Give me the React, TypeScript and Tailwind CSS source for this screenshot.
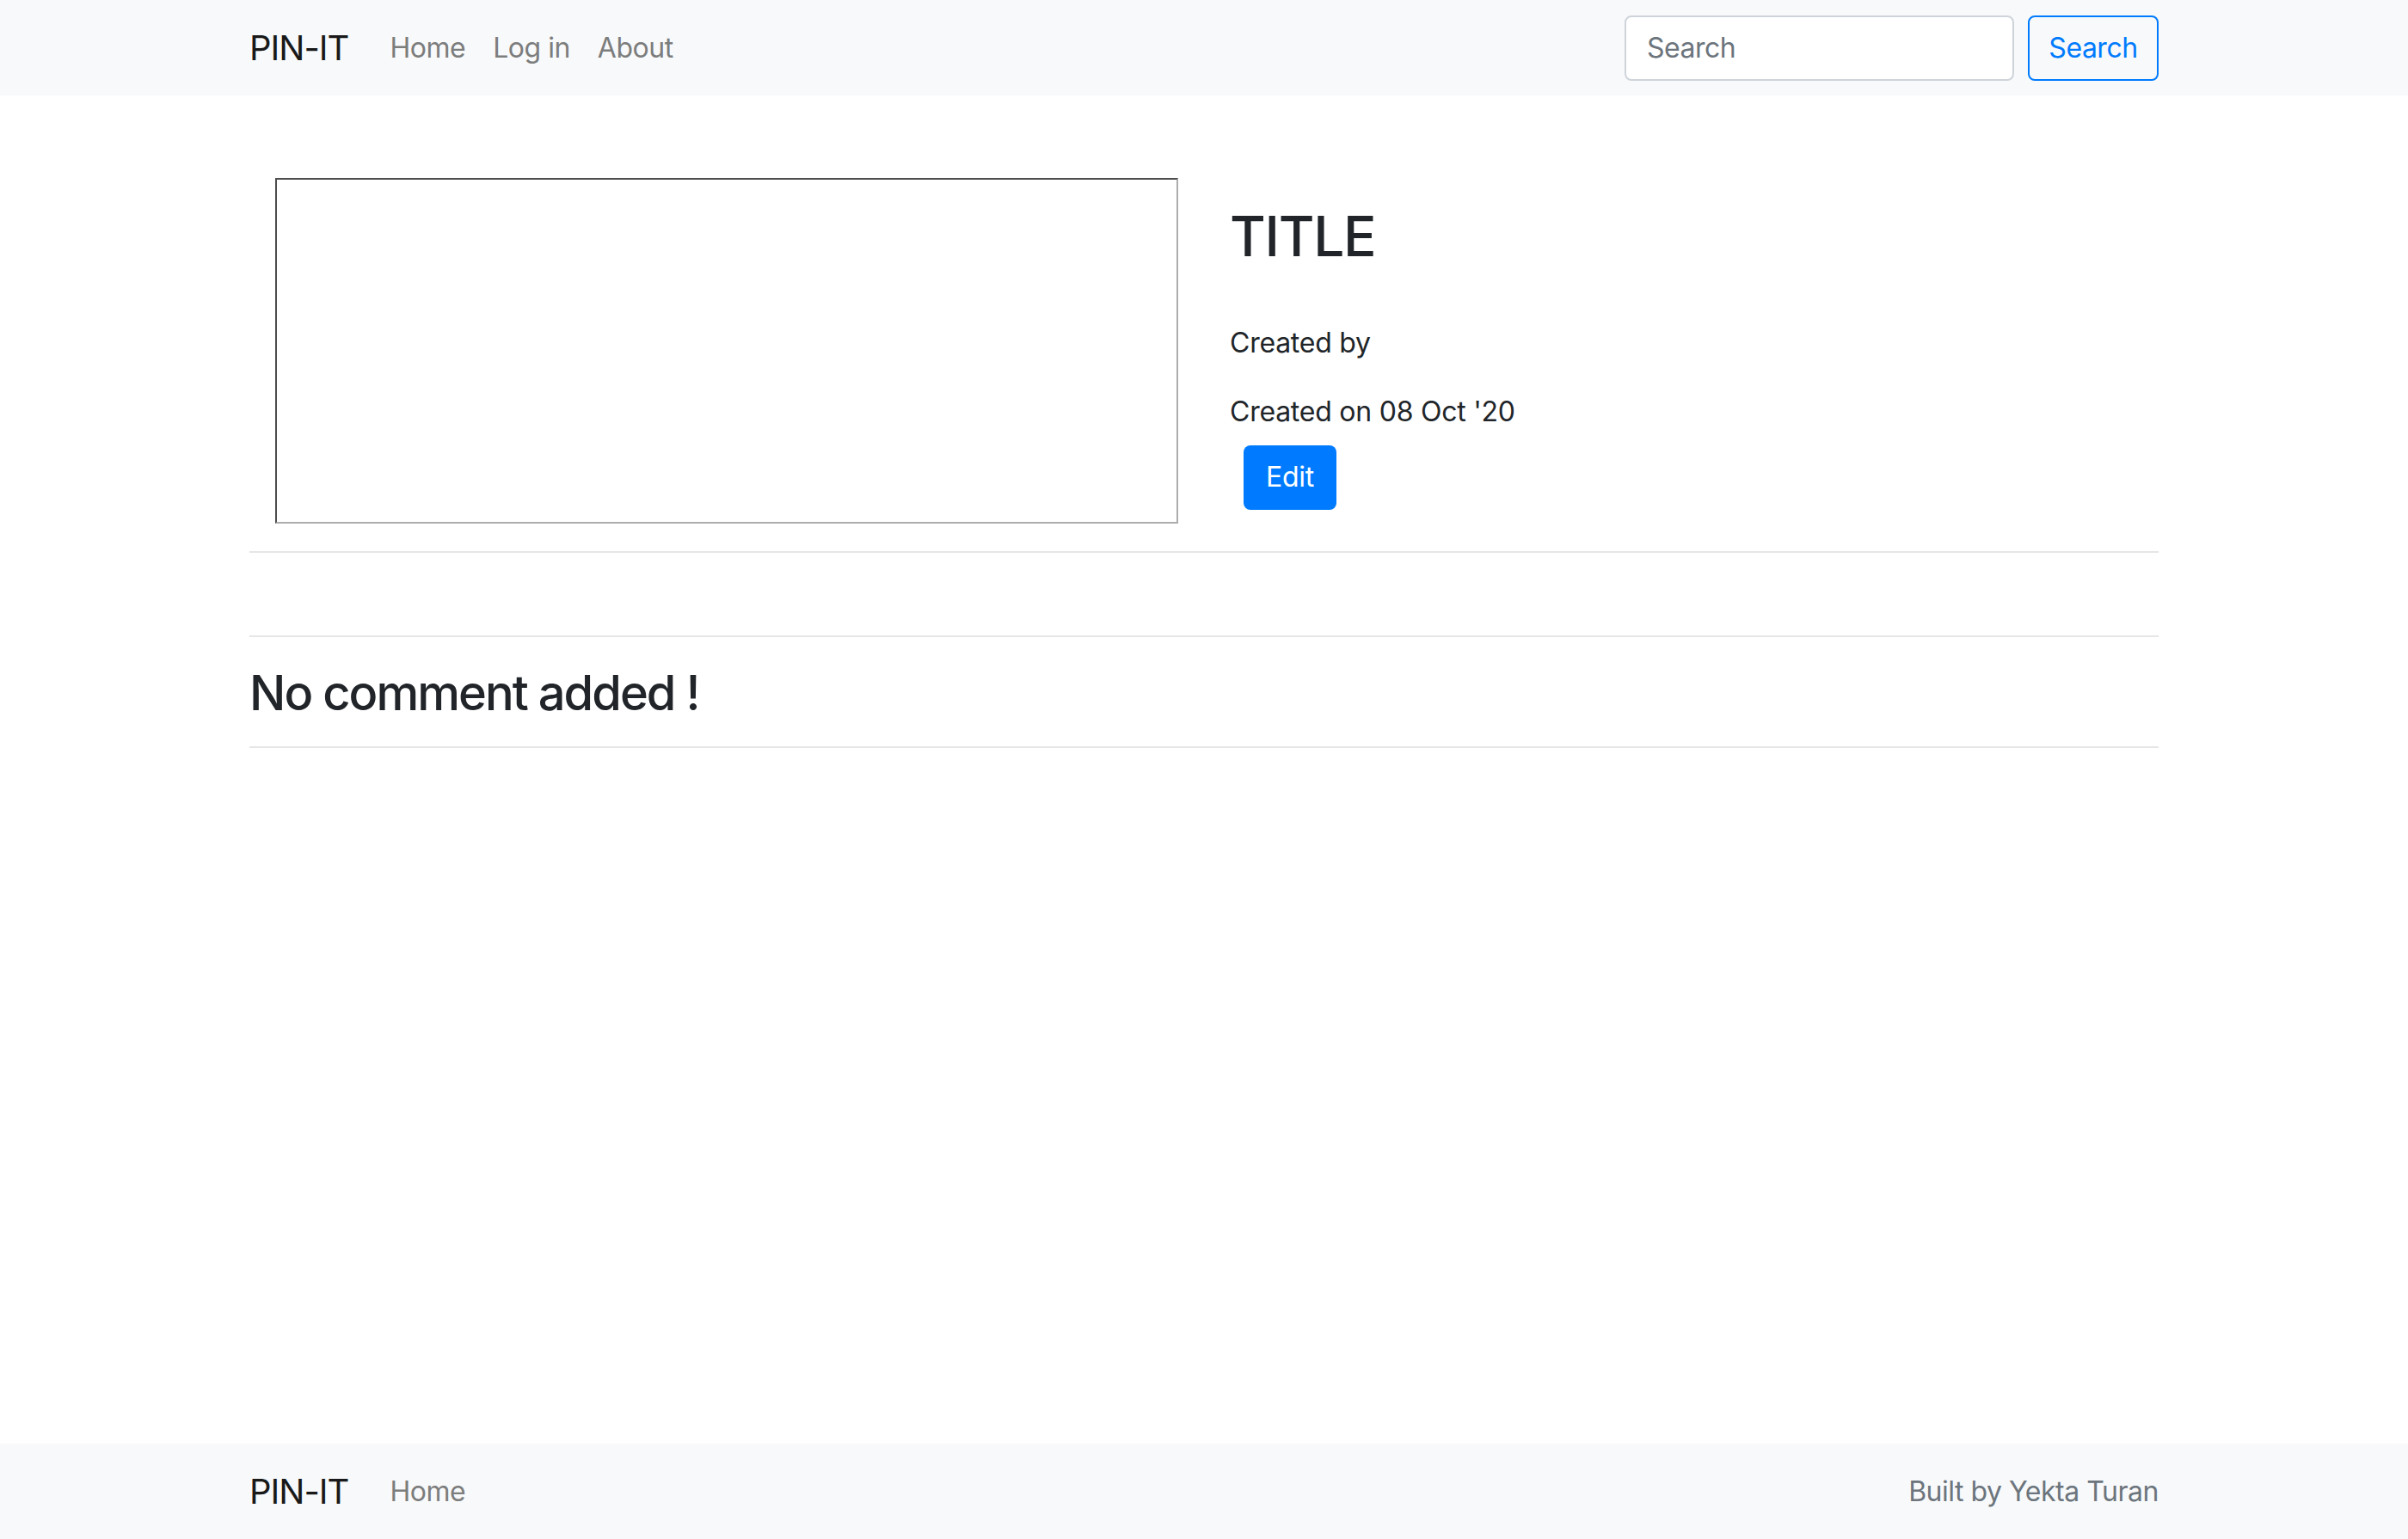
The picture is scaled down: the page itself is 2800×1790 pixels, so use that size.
import React from 'react'

const font = { fontFamily: 'Inter, "Noto Sans", sans-serif' }

const Brand = () => (
  <span className="text-[40px] leading-[60px] tracking-[-0.025em] text-[#191919] mr-[32px]">PIN-IT</span>
)

const NavLink = ({ label }: { label: string }) => (
  <a className="px-[16px] text-[32px] leading-[48px] tracking-[-0.015em] text-[#7c7d7d]">{label}</a>
)

const Navbar = () => (
  <nav className="h-[111px] bg-[#f8f9fa] flex items-center">
    <div className="w-[2220px] mx-auto flex items-center justify-between">
      <div className="flex items-center">
        <Brand />
        <div className="flex items-center">
          <NavLink label="Home" />
          <NavLink label="Log in" />
          <NavLink label="About" />
        </div>
      </div>
      <form className="flex items-center">
        <input
          placeholder="Search"
          className="w-[453px] h-[76px] px-[24px] text-[32px] tracking-[-0.015em] bg-white border-2 border-[#ced4da] rounded-[8px] placeholder:text-[#6c757d] mr-[16px] outline-none"
          style={font}
        />
        <button
          type="button"
          className="w-[152px] h-[76px] text-[32px] tracking-[-0.015em] text-[#007bff] border-2 border-[#007bff] rounded-[8px]"
          style={font}
        >
          Search
        </button>
      </form>
    </div>
  </nav>
)

const PinDetail = () => (
  <div className="flex pt-[96px]">
    <div className="w-[1110px] pl-[30px]">
      <div className="w-[1050px] h-[402px] border-2 border-t-[#4d4d4d] border-l-[#4d4d4d] border-r-[#adadad] border-b-[#adadad]" />
    </div>
    <div className="flex-1 pl-[30px] text-[#212529] tracking-[-0.015em]">
      <h2 className="mt-[30px] mb-[61px] text-[64px] leading-[1.2] font-medium tracking-[-0.02em]">TITLE</h2>
      <p className="text-[32px] leading-[48px] mb-[32px]">Created by</p>
      <p className="text-[32px] leading-[48px]">Created on 08 Oct '20</p>
      <button className="mt-[15px] ml-[16px] w-[108px] h-[75px] rounded-[8px] bg-[#007bff] text-white text-[32px]">
        Edit
      </button>
    </div>
  </div>
)

const Footer = () => (
  <footer className="mt-auto h-[111px] bg-[#f8f9fa] flex items-center">
    <div className="w-[2220px] mx-auto flex items-center justify-between">
      <div className="flex items-center">
        <Brand />
        <NavLink label="Home" />
      </div>
      <span className="text-[32px] tracking-[-0.015em] text-[#6c757d]">Built by Yekta Turan</span>
    </div>
  </footer>
)

export default function App() {
  return (
    <div className="min-h-screen flex flex-col bg-white" style={font}>
      <Navbar />
      <main className="w-[2220px] mx-auto">
        <PinDetail />
        <div className="mt-[32px] h-[2px] bg-[#e6e6e6]" />
        <div className="mt-[96px] h-[2px] bg-[#e6e6e6]" />
        <h3 className="mt-[32px] text-[56px] leading-[1.2] font-medium tracking-[-0.035em] text-[#212529]">No comment added !</h3>
        <div className="mt-[28px] h-[2px] bg-[#e6e6e6]" />
      </main>
      <Footer />
    </div>
  )
}
